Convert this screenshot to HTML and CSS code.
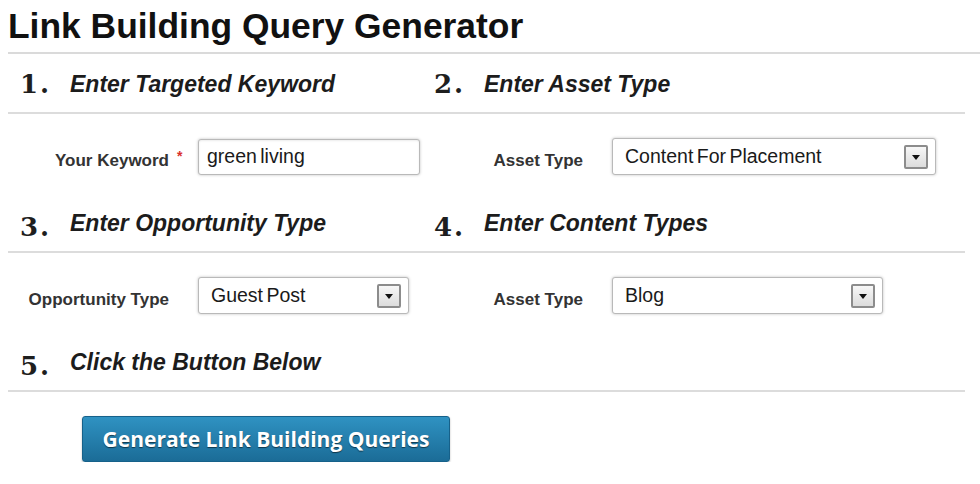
FILE: index.html
```html
<!DOCTYPE html>
<html lang="en">

<head>
  <meta charset="UTF-8" />
  <title>Link Building Query Generator</title>
  <link rel="stylesheet" href="styles.css">
</head>

<body>
  <div class="generator">
    <h1 class="title">Link Building Query Generator</h1>

    <div class="step-row">
      <h2 class="step"><span class="num">1.</span>Enter Targeted Keyword</h2>
      <h2 class="step"><span class="num">2.</span>Enter Asset Type</h2>
    </div>
    <div class="field-row">
      <div class="field">
        <label class="field-label">Your Keyword</label>
        <span class="req">*</span>
        <input class="text-input" type="text" value="green living" />
      </div>
      <div class="field">
        <label class="field-label">Asset Type</label>
        <span class="req"></span>
        <div class="select select-asset">
          <span class="select-value">Content For Placement</span>
          <span class="select-arrow"></span>
        </div>
      </div>
    </div>

    <div class="step-row">
      <h2 class="step"><span class="num low">3.</span>Enter Opportunity Type</h2>
      <h2 class="step"><span class="num low">4.</span>Enter Content Types</h2>
    </div>
    <div class="field-row">
      <div class="field">
        <label class="field-label">Opportunity Type</label>
        <span class="req"></span>
        <div class="select select-opportunity">
          <span class="select-value">Guest Post</span>
          <span class="select-arrow"></span>
        </div>
      </div>
      <div class="field">
        <label class="field-label">Asset Type</label>
        <span class="req"></span>
        <div class="select select-content">
          <span class="select-value">Blog</span>
          <span class="select-arrow"></span>
        </div>
      </div>
    </div>

    <div class="step-row">
      <h2 class="step"><span class="num low">5.</span>Click the Button Below</h2>
    </div>

    <button class="generate">Generate Link Building Queries</button>
  </div>
</body>

</html>
```

FILE: styles.css
```css
* {
  box-sizing: border-box;
}

body {
  margin: 0;
  background: #fff;
  font-family: "Liberation Sans", Arial, sans-serif;
  color: #1a1a1a;
}

.generator {
  padding-left: 8px;
}

.title {
  margin: 0;
  padding: 6px 0 6px 0;
  font-size: 35.4px;
  line-height: 40px;
  font-weight: bold;
  color: #111;
  border-bottom: 2px solid #dadada;
}

.step-row {
  display: grid;
  grid-template-columns: 414px 1fr;
  align-items: center;
  height: 60px;
  padding: 2px 0 0 14px;
  margin-right: 15px;
  border-bottom: 2px solid #dcdcdc;
}

.step {
  margin: 0;
  display: flex;
  align-items: center;
  font-size: 23px;
  font-style: italic;
  font-weight: bold;
  color: #1c1c1c;
}

.step .num {
  width: 48px;
  margin-left: -2px;
  margin-right: 2px;
  font-family: "DejaVu Serif", "Liberation Serif", serif;
  font-size: 26px;
  font-weight: bold;
  font-style: normal;
  letter-spacing: 2px;
  color: #1e1e1e;
}

.step .num.low {
  margin-top: 8px;
}

.field-row {
  display: grid;
  grid-template-columns: 414px 1fr;
  padding: 24px 0 18px 14px;
}

.field {
  display: flex;
  align-items: center;
}

.field-label {
  width: 147px;
  margin-top: 8px;
  text-align: right;
  font-size: 17px;
  font-weight: bold;
  color: #333;
}

.req {
  width: 29px;
  padding-left: 8px;
  margin-top: -2px;
  color: #d9302c;
  font-size: 14px;
  font-weight: bold;
}

.text-input {
  width: 222px;
  height: 36px;
  padding: 0 8px;
  border: 1px solid #b9b9b9;
  border-radius: 3px;
  box-shadow: 0 0 3px rgba(0, 0, 0, 0.25), inset 0 1px 2px rgba(0, 0, 0, 0.08);
  font-family: "Liberation Sans", Arial, sans-serif;
  font-size: 19.5px;
  word-spacing: -2px;
  color: #1a1a1a;
  outline: none;
}

.select {
  display: flex;
  align-items: center;
  justify-content: space-between;
  height: 37px;
  padding: 0 7px 0 12px;
  border: 1px solid #b9b9b9;
  border-radius: 3px;
  background: #fff;
  box-shadow: 0 0 3px rgba(0, 0, 0, 0.25);
}

.select-asset {
  width: 324px;
}

.select-opportunity {
  width: 211px;
}

.select-content {
  width: 271px;
}

.select-value {
  font-size: 19.5px;
  word-spacing: -2px;
  color: #1a1a1a;
}

.select-arrow {
  position: relative;
  width: 24px;
  height: 24px;
  border: 2px solid #8c8c8c;
  border-radius: 2px;
  background: linear-gradient(#f7f7f7, #dcdcdc);
}

.select-arrow::after {
  content: "";
  position: absolute;
  left: 6px;
  top: 8px;
  border-left: 4px solid transparent;
  border-right: 4px solid transparent;
  border-top: 5px solid #111;
}

.generate {
  display: block;
  margin: 24px 0 0 74px;
  width: 368px;
  height: 46px;
  padding: 0;
  border: 1px solid #16618a;
  border-radius: 3px;
  background: linear-gradient(#2f92c2, #1b6c97);
  box-shadow: 0 1px 2px rgba(0, 0, 0, 0.3);
  color: #fff;
  font-family: "Open Sans", "Liberation Sans", sans-serif;
  font-size: 21px;
  font-weight: bold;
  text-shadow: 0 1px 1px rgba(0, 0, 0, 0.55);
  cursor: pointer;
}
```
